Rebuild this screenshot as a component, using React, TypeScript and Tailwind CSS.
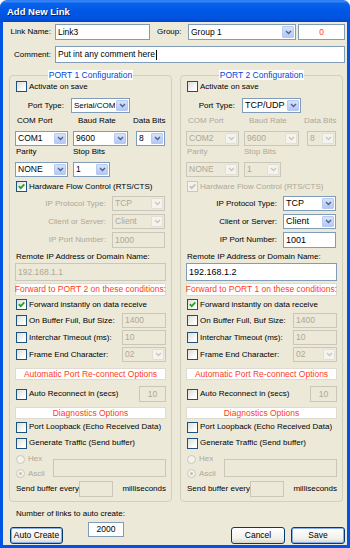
import React from "react";

const DIS = "text-[#aca899]";

function Check({ checked = false, disabled = false }: { checked?: boolean; disabled?: boolean }) {
  return (
    <span
      className={`inline-flex items-center justify-center w-[11px] h-[11px] shrink-0 border ${
        disabled
          ? "border-[#cac8bb] bg-[#f3f2ec]"
          : "border-[#1c5180] bg-[linear-gradient(135deg,#dcdcd7,#ffffff_80%)]"
      }`}
    >
      {checked && (
        <svg viewBox="0 0 9 9" className="w-[9px] h-[9px]">
          <path
            d="M1.8 4.2 L3.7 6.2 L7.3 2.4"
            stroke={disabled ? "#c4c2b5" : "#21a121"}
            strokeWidth="1.7"
            fill="none"
          />
        </svg>
      )}
    </span>
  );
}

function CheckRow({
  label,
  checked = false,
  disabled = false,
  cls = "",
}: {
  label: string;
  checked?: boolean;
  disabled?: boolean;
  cls?: string;
}) {
  return (
    <div className={`flex items-center pl-[1px] ${cls}`}>
      <Check checked={checked} disabled={disabled} />
      <span className={`ml-[2px] whitespace-nowrap ${disabled ? DIS : ""}`}>{label}</span>
    </div>
  );
}

function Chevron({ color }: { color: string }) {
  return (
    <svg viewBox="0 0 8 6" className="w-[7px] h-[5px]">
      <path d="M1 1.2 L4 4.2 L7 1.2" stroke={color} strokeWidth="1.6" fill="none" />
    </svg>
  );
}

function Combo({
  value,
  cls,
  disabled = false,
  big = false,
  small = false,
}: {
  value: string;
  cls: string;
  disabled?: boolean;
  big?: boolean;
  small?: boolean;
}) {
  const size = big ? "text-[9px]" : small ? "text-[8px]" : "text-[8.5px]";
  return (
    <div
      className={`flex items-stretch border ${
        disabled ? "border-[#c9c7ba] bg-[#ece9d8] text-[#aca899]" : "border-[#7f9db9] bg-white text-black"
      } ${cls}`}
    >
      <div className={`flex-1 min-w-0 flex items-center pl-[2px] whitespace-nowrap overflow-hidden ${size}`}>
        {value}
      </div>
      <div
        className={`w-[12px] shrink-0 m-[1px] flex items-center justify-center rounded-[1px] ${
          disabled
            ? "bg-[#f4f3ee] border border-[#e2e0d6]"
            : "bg-[linear-gradient(to_bottom,#d6e2fc,#b3c8f5)] border border-[#b7c9f0]"
        }`}
      >
        <Chevron color={disabled ? "#c9c7ba" : "#4d6185"} />
      </div>
    </div>
  );
}

function TextBox({
  value = "",
  cls,
  disabled = false,
  align = "left",
  big = false,
  caret = false,
  red = false,
}: {
  value?: string;
  cls: string;
  disabled?: boolean;
  align?: "left" | "center" | "right";
  big?: boolean;
  caret?: boolean;
  red?: boolean;
}) {
  const a = align === "center" ? "justify-center" : align === "right" ? "justify-end pr-[4px]" : "justify-start pl-[2px]";
  const color = disabled ? "text-[#aca899]" : red ? "text-[#ff3c1a]" : "text-black";
  return (
    <div
      className={`flex items-center border whitespace-nowrap ${a} ${
        disabled ? "border-[#c9c7ba] bg-[#ece9d8]" : "border-[#7f9db9] bg-white"
      } ${color} ${big ? "text-[9px]" : "text-[8.5px]"} ${cls}`}
    >
      {value}
      {caret && <span className="inline-block w-[1px] h-[10px] bg-black ml-[1px]" />}
    </div>
  );
}

function Radio({ checked = false }: { checked?: boolean }) {
  return (
    <span className="inline-flex items-center justify-center w-[9px] h-[9px] rounded-full border border-[#cac8bb] bg-[#f3f2ec] shrink-0">
      {checked && <span className="w-[3px] h-[3px] rounded-full bg-[#c4c2b5]" />}
    </span>
  );
}

function RedHead({ text, cls }: { text: string; cls: string }) {
  return (
    <div
      className={`flex items-center justify-center bg-white border border-[#dedcd2] text-[#ff3c1a] text-[8.5px] whitespace-nowrap ${cls}`}
    >
      {text}
    </div>
  );
}

function Button({ label, cls, focus = false }: { label: string; cls: string; focus?: boolean }) {
  return (
    <div
      className={`flex items-center justify-center border border-[#003c74] rounded-[3px] bg-[linear-gradient(to_bottom,#ffffff,#f1f0ea_70%,#d9d4c8)] text-[8.5px] ${
        focus ? "shadow-[inset_0_0_0_1px_#8cb0ec]" : ""
      } ${cls}`}
    >
      {label}
    </div>
  );
}

function Panel({ port }: { port: 1 | 2 }) {
  const left = port === 1;
  const serialDis = !left;
  const ipDis = left;
  return (
    <fieldset className="border border-[#d0d0bf] rounded-[4px] px-[5px] pb-[4px] w-[163px] min-w-0">
      <legend className="mx-auto px-[1px] bg-white text-[#0046d5] h-[10px] leading-[10px] text-[8.5px]">
        PORT {port} Configuration
      </legend>
      <div className="flex flex-col">
        <CheckRow label="Activate on save" cls="h-[13px]" />

        <div className="mt-[5px] h-[15px] flex items-center">
          <span className="w-[49px] text-right">Port Type:</span>
          <Combo value={left ? "Serial/COM" : "TCP/UDP"} cls="ml-[7px] w-[59px] h-[15px]" big={!left} small={left} />
        </div>

        <div className={`mt-[2px] h-[12px] flex items-center ${serialDis ? DIS : ""}`}>
          <span className="w-[63px] pl-[2px]">COM Port</span>
          <span className="w-[55px]">Baud Rate</span>
          <span>Data Bits</span>
        </div>

        <div className="mt-[4px] h-[15px] flex">
          <Combo value={left ? "COM1" : "COM2"} cls="w-[53px] h-[15px]" disabled={serialDis} />
          <Combo value="9600" cls="ml-[5px] w-[55px] h-[15px]" disabled={serialDis} />
          <Combo value="8" cls="ml-[8px] w-[29px] h-[15px]" disabled={serialDis} />
        </div>

        <div className={`h-[12px] flex items-center ${serialDis ? DIS : ""}`}>
          <span className="w-[58px] pl-[1px]">Parity</span>
          <span>Stop Bits</span>
        </div>

        <div className="mt-[4px] h-[15px] flex">
          <Combo value="NONE" cls="w-[53px] h-[15px]" disabled={serialDis} />
          <Combo value="1" cls="ml-[5px] w-[37px] h-[15px]" disabled={serialDis} />
        </div>

        <CheckRow label="Hardware Flow Control (RTS/CTS)" checked disabled={serialDis} cls="mt-[3px] h-[13px]" />

        <div className="mt-[3px] h-[15px] flex items-center">
          <span className={`w-[91px] text-right ${ipDis ? DIS : ""}`}>IP Protocol Type:</span>
          <Combo value="TCP" cls="ml-[6px] w-[53px] h-[15px]" disabled={ipDis} big={!ipDis} />
        </div>
        <div className="mt-[3px] h-[15px] flex items-center">
          <span className={`w-[91px] text-right ${ipDis ? DIS : ""}`}>Client or Server:</span>
          <Combo value="Client" cls="ml-[6px] w-[53px] h-[15px]" disabled={ipDis} big={!ipDis} />
        </div>
        <div className="mt-[3px] h-[16px] flex items-center">
          <span className={`w-[91px] text-right ${ipDis ? DIS : ""}`}>IP Port Number:</span>
          <TextBox value={left ? "1000" : "1001"} cls="ml-[6px] w-[53px] h-[16px]" disabled={ipDis} big={!ipDis} />
        </div>

        <div className="mt-[3px] h-[12px] flex items-center pl-[1px]">Remote IP Address or Domain Name:</div>
        <TextBox value={left ? "192.168.1.1" : "192.168.1.2"} cls="h-[18px] w-full" disabled={ipDis} big={!ipDis} />

        <RedHead text={`Forward to PORT ${left ? 2 : 1} on these conditions:`} cls="mt-[2px] h-[13px]" />
        <CheckRow label="Forward instantly on data receive" checked cls="mt-[2px] h-[13px]" />

        <div className="mt-[2px] h-[15px] flex items-center">
          <CheckRow label="On Buffer Full, Buf Size:" />
          <TextBox value="1400" cls="ml-auto w-[44px] h-[15px]" disabled />
        </div>
        <div className="mt-[2px] h-[15px] flex items-center">
          <CheckRow label="Interchar Timeout (ms):" />
          <TextBox value="10" cls="ml-auto w-[44px] h-[15px]" disabled />
        </div>
        <div className="mt-[2px] h-[15px] flex items-center">
          <CheckRow label="Frame End Character:" />
          <Combo value="02" cls="ml-auto w-[44px] h-[15px]" disabled />
        </div>

        <RedHead text="Automatic Port Re-connect Options" cls="mt-[6px] h-[12px]" />
        <div className="mt-[6px] h-[16px] flex items-center">
          <CheckRow label="Auto Reconnect in (secs)" />
          <TextBox value="10" cls="ml-auto w-[27px] h-[16px]" disabled align="center" />
        </div>

        <RedHead text="Diagnostics Options" cls="mt-[5px] h-[12px]" />
        <CheckRow label="Port Loopback (Echo Received Data)" cls="mt-[2px] h-[12px]" />
        <CheckRow label="Generate Traffic (Send buffer)" cls="mt-[4px] h-[12px]" />

        <div className="mt-[3px] h-[29px] flex">
          <div className={`w-[38px] flex flex-col ${DIS}`}>
            <div className="h-[14px] flex items-center pl-[1px]">
              <Radio />
              <span className="ml-[3px]">Hex</span>
            </div>
            <div className="h-[15px] flex items-center pl-[1px]">
              <Radio checked />
              <span className="ml-[3px]">Ascii</span>
            </div>
          </div>
          <TextBox cls="mt-[7px] h-[18px] w-[113px]" disabled />
        </div>

        <div className="h-[16px] flex items-center">
          <span className="w-[67px] pl-[1px] whitespace-nowrap">Send buffer every</span>
          <TextBox cls="w-[36px] h-[16px]" disabled />
          <span className="ml-[9px]">milliseconds</span>
        </div>
      </div>
    </fieldset>
  );
}

export default function App() {
  return (
    <div className="w-[350px] h-[548px] flex flex-col bg-white font-['Liberation_Sans',Arial,sans-serif] text-[8px] leading-none text-black overflow-hidden">
      <div className="h-[22px] shrink-0 rounded-t-[7px] bg-[linear-gradient(to_bottom,#3d8cf7_0%,#0a62ea_12%,#0058e6_45%,#0054e0_80%,#0046c8_100%)] flex items-center pl-[7px] border-t border-[#2f7df5]">
        <span className="text-white font-bold text-[9.5px] [text-shadow:1px_1px_0_#0a246a]">Add New Link</span>
      </div>
      <div className="flex-1 flex flex-col bg-[#0054e3] px-[3px] pb-[3px]">
        <div className="flex-1 flex flex-col bg-[#ece9d8] pl-[5px] pr-[2px]">
          <div className="mt-[2px] h-[16px] flex items-center">
            <span className="w-[43px] text-right">Link Name:</span>
            <TextBox value="Link3" cls="ml-[4px] w-[95px] h-[16px]" />
            <span className="ml-[7px] w-[28px]">Group:</span>
            <Combo value="Group 1" cls="ml-[3px] w-[108px] h-[16px]" />
            <TextBox value="0" cls="ml-[2px] w-[47px] h-[16px]" align="center" red />
          </div>
          <div className="mt-[6px] h-[17px] flex items-center">
            <span className="w-[43px] text-right">Comment:</span>
            <TextBox value="Put int any comment here" cls="ml-[4px] w-[290px] h-[17px]" caret />
          </div>
          <div className="mt-[7px] flex items-start">
            <div className="ml-[1px]">
              <Panel port={1} />
            </div>
            <div className="ml-[8px]">
              <Panel port={2} />
            </div>
          </div>
          <div className="mt-[6px] flex items-start">
            <div className="ml-[2px] flex flex-col">
              <span className="ml-[6px] h-[12px] flex items-center">Number of links to auto create:</span>
              <div className="flex items-start">
                <Button label="Auto Create" cls="mt-[7px] w-[53px] h-[17px]" focus />
                <TextBox value="2000" cls="ml-[25px] mt-[2px] w-[36px] h-[15px]" align="center" />
              </div>
            </div>
            <div className="ml-auto mt-[19px] flex gap-[6px]">
              <Button label="Cancel" cls="w-[54px] h-[17px]" />
              <Button label="Save" cls="w-[54px] h-[17px]" focus />
            </div>
          </div>
        </div>
      </div>
    </div>
  );
}
